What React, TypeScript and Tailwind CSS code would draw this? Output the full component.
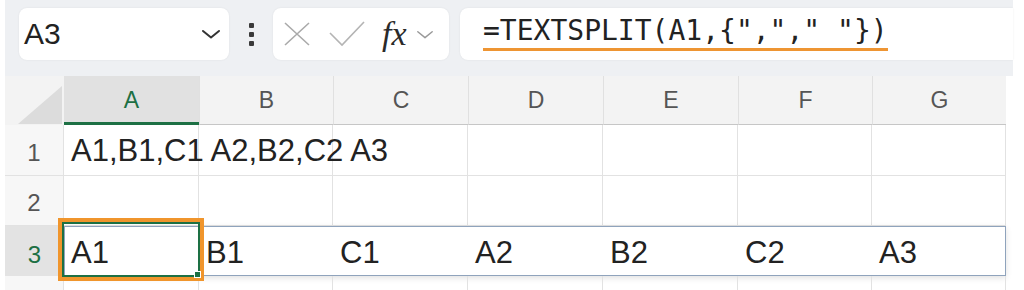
import React from "react";

const cols = [
  { label: "A", w: "w-[135px]" },
  { label: "B", w: "w-[134px]" },
  { label: "C", w: "w-[135px]" },
  { label: "D", w: "w-[135px]" },
  { label: "E", w: "w-[135px]" },
  { label: "F", w: "w-[134px]" },
  { label: "G", w: "w-[134px]" },
];

const spill = ["A1", "B1", "C1", "A2", "B2", "C2", "A3"];

const sans = { fontFamily: '"Liberation Sans", Arial, sans-serif' };

function Chevron({ className }: { className: string }) {
  return (
    <svg viewBox="0 0 20 10" className={className} fill="none" strokeLinecap="round" strokeLinejoin="round">
      <path d="M2 2 L10 8.5 L18 2" />
    </svg>
  );
}

function FormulaBar() {
  return (
    <div className="flex h-[76px] items-start bg-[#eef0f3] pl-[14px] pt-[8px]">
      <div className="flex h-[52px] w-[210px] items-center justify-between rounded-lg bg-white pl-[5px] pr-[8px] shadow-[0_0_2px_rgba(0,0,0,0.08)]">
        <span className="text-[30px] leading-none text-[#222]" style={sans}>
          A3
        </span>
        <Chevron className="h-[10px] w-[20px] stroke-[#333] [stroke-width:2]" />
      </div>
      <div className="flex h-[52px] w-[44px] flex-col items-center justify-center gap-[4px]">
        <span className="h-[5px] w-[5px] rounded-[1px] bg-[#3a3a3a]" />
        <span className="h-[5px] w-[5px] rounded-[1px] bg-[#3a3a3a]" />
        <span className="h-[5px] w-[5px] rounded-[1px] bg-[#3a3a3a]" />
      </div>
      <div className="flex h-[52px] w-[176px] items-center rounded-lg bg-white pl-[11px] shadow-[0_0_2px_rgba(0,0,0,0.08)]">
        <svg viewBox="0 0 26 24" className="h-[24px] w-[26px]" fill="none" stroke="#aaaaaa" strokeWidth="1.6">
          <path d="M1 1 L25 23 M25 1 L1 23" />
        </svg>
        <svg viewBox="0 0 36 26" className="ml-[19px] h-[26px] w-[36px]" fill="none" stroke="#b4b4b4" strokeWidth="1.6">
          <path d="M1 12 L13 24 L35 1" />
        </svg>
        <span
          className="ml-[17px] text-[34px] italic leading-none text-[#2a2a2a]"
          style={{ fontFamily: '"Liberation Serif", "Times New Roman", serif' }}
        >
          fx
        </span>
        <Chevron className="ml-[8px] h-[9px] w-[20px] stroke-[#999] [stroke-width:1.6]" />
      </div>
      <div className="ml-[11px] flex h-[52px] flex-1 items-center rounded-l-lg bg-white pl-[23px] shadow-[0_0_2px_rgba(0,0,0,0.08)]">
        <span
          className="border-b-[3px] border-[#ee9533] pb-[3px] text-[28px] leading-none text-[#222]"
          style={{ fontFamily: '"DejaVu Sans Mono", "Liberation Mono", monospace' }}
        >
          =TEXTSPLIT(A1,{'{'}",","&nbsp;"{'}'})
        </span>
      </div>
    </div>
  );
}

export default function App() {
  return (
    <div className="h-[290px] w-[1024px] overflow-hidden bg-white" style={sans}>
      <div className="ml-[5px] w-[1008px]">
        <FormulaBar />

        {/* column headers */}
        <div className="flex h-[49px]">
          <div className="relative w-[59px] bg-[#f3f3f3]">
            <svg viewBox="0 0 44 38" className="absolute bottom-[1px] right-[2px] h-[38px] w-[44px]">
              <polygon points="44,0 44,38 0,38" fill="#dcdcdc" />
            </svg>
          </div>
          {cols.map((c, i) => (
            <div
              key={c.label}
              className={
                i === 0
                  ? `${c.w} flex justify-center border-b-[3px] border-[#1d7044] bg-[#e1e1e1] pt-[7px] text-[23px] text-[#1d7044]`
                  : `${c.w} flex justify-center border-b border-l border-b-[#c6c6c6] border-l-[#e0e0e0] bg-[#f3f3f3] pt-[7px] text-[23px] text-[#555]`
              }
            >
              {c.label}
            </div>
          ))}
        </div>

        {/* row 1 */}
        <div className="flex h-[51px]">
          <div className="flex w-[59px] items-center justify-center border-r border-b border-[#e2e2e2] bg-[#f7f7f7] pt-[5px] text-[24px] text-[#555]">
            1
          </div>
          {cols.map((c, i) => (
            <div key={c.label} className={`${c.w} flex items-center border-r border-b border-[#e2e2e2] pl-[7px] pt-[3px]`}>
              {i === 0 ? (
                <span className="relative z-10 whitespace-nowrap text-[31px] text-[#222]">A1,B1,C1 A2,B2,C2 A3</span>
              ) : null}
            </div>
          ))}
        </div>

        {/* row 2 */}
        <div className="flex h-[50px]">
          <div className="flex w-[59px] items-center justify-center border-r border-b border-[#e2e2e2] bg-[#f7f7f7] pt-[5px] text-[24px] text-[#555]">
            2
          </div>
          {cols.map((c) => (
            <div key={c.label} className={`${c.w} border-r border-b border-[#e2e2e2]`} />
          ))}
        </div>

        {/* row 3 - spill range */}
        <div className="flex h-[50px]">
          <div className="flex w-[59px] items-center justify-center bg-[#e3e3e3] pt-[8px] text-[24px] text-[#1d7044]">
            3
          </div>
          <div className="flex shadow-[0_2px_6px_rgba(0,0,0,0.12)] outline outline-1 -outline-offset-1 outline-[#8fa3bc]">
            {cols.map((c, i) => (
              <div key={c.label} className={`${c.w} relative flex items-center pl-[7px] pt-[4px]`}>
                <span className="text-[31px] text-[#222]">{spill[i]}</span>
                {i === 0 ? (
                  <div className="absolute -bottom-[5px] -left-[6px] -right-[5px] -top-[8px] z-20 border-4 border-[#f0952c]">
                    <div className="relative h-full w-full border-2 border-[#1d7044]">
                      <span className="absolute -bottom-[3px] -right-[3px] h-[7px] w-[7px] border border-white bg-[#1d7044]" />
                    </div>
                  </div>
                ) : null}
              </div>
            ))}
          </div>
        </div>

        {/* partial row 4 */}
        <div className="flex h-[20px]">
          <div className="w-[59px] border-r border-[#e2e2e2] bg-[#f7f7f7]" />
          {cols.map((c) => (
            <div key={c.label} className={`${c.w} border-r border-[#e2e2e2]`} />
          ))}
        </div>
      </div>
    </div>
  );
}
